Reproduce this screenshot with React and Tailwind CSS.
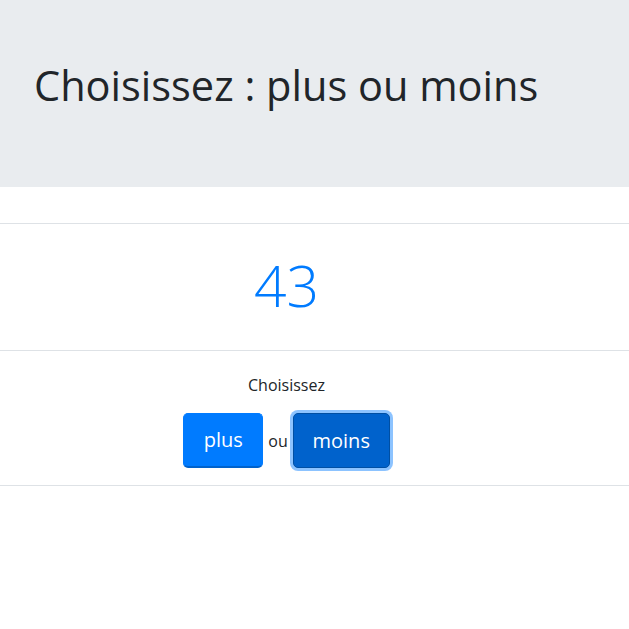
import React from 'react';

const font = { fontFamily: '"Open Sans", "Noto Sans", sans-serif' };

const App = () => {
  return (
    <div className="min-h-[629px] bg-white text-[#212529]" style={font}>
      <div className="h-[187px] bg-[#e9ecef] pl-[34px] pr-8 pt-[60px]">
        <h1 className="text-[41.5px] leading-[50px] font-normal">Choisissez : plus ou moins</h1>
      </div>
      <div className="mt-9 border-b border-[#dee2e6]">
        <div className="h-[127px] border-t border-[#dee2e6] pr-[56px] flex items-center justify-center">
          <span className="text-[57px] font-light leading-none text-[#007bff] -mt-1">43</span>
        </div>
        <div className="h-[135px] border-t border-[#dee2e6] pr-[56px] flex flex-col items-center pt-[22px]">
          <p className="text-[16px] leading-6">Choisissez</p>
          <div className="mt-[16px] flex items-center">
            <button className="w-[80px] h-[55px] rounded-[5px] bg-[#007bff] border border-[#007bff] border-b-2 border-b-[#0062cc] text-white text-[20px]">
              plus
            </button>
            <span className="mx-[5px] text-[16px]">ou</span>
            <button className="w-[97px] h-[55px] rounded-[5px] bg-[#0062cc] border border-[#004fa3] text-white text-[20px] shadow-[0_0_0_3px_rgba(0,123,255,0.45)]">
              moins
            </button>
          </div>
        </div>
      </div>
    </div>
  );
};

export default App;
